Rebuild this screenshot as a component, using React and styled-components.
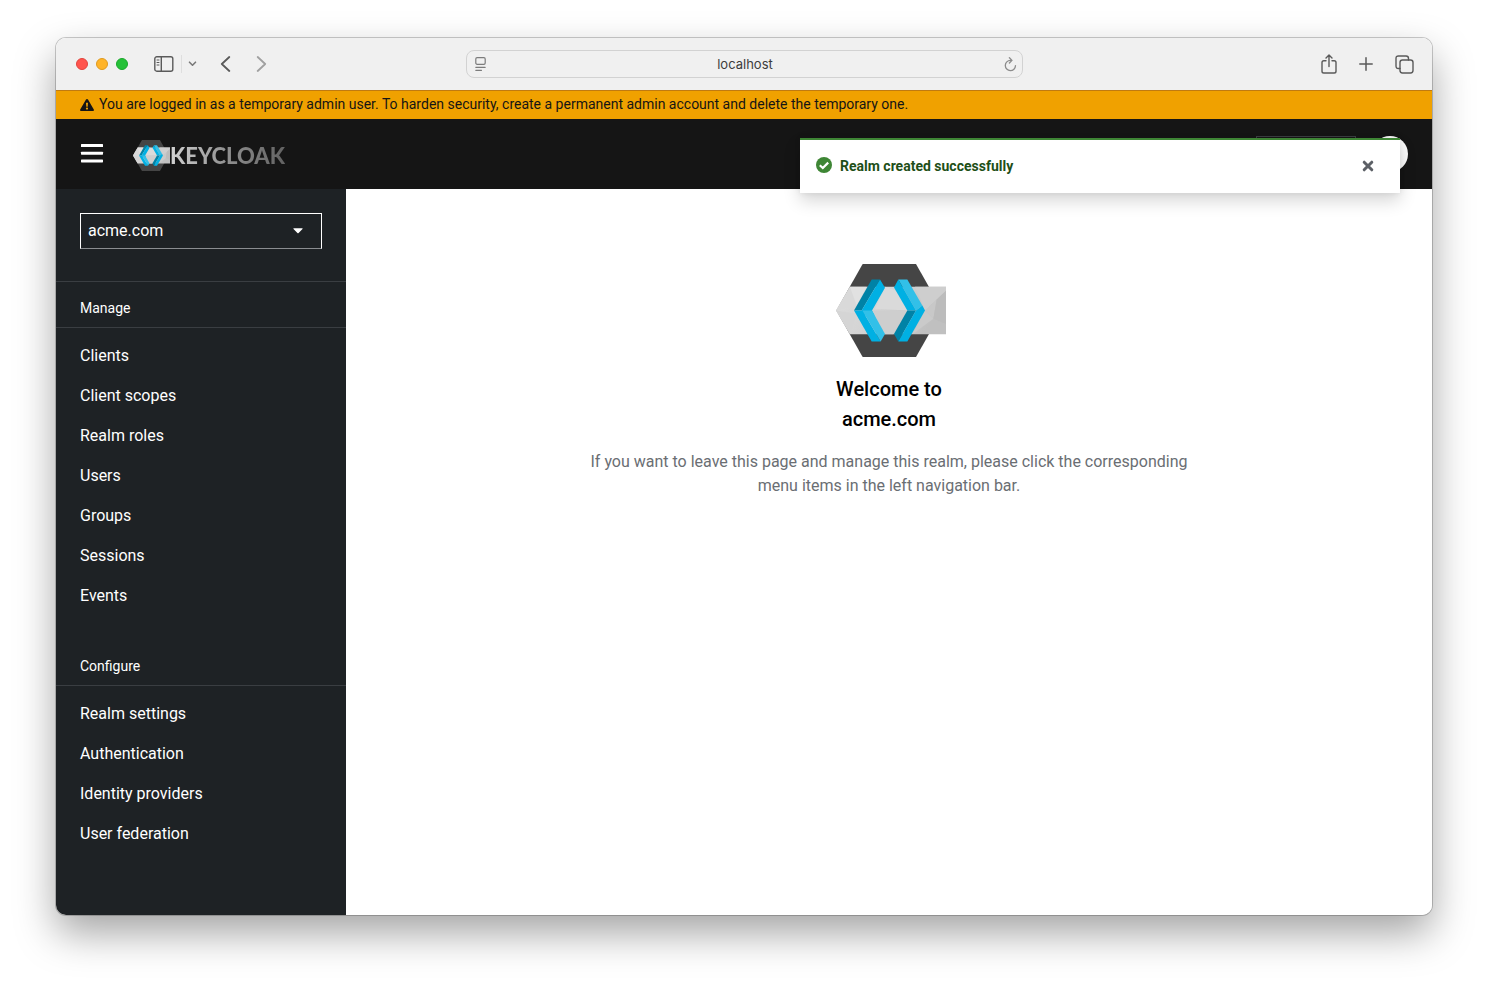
import React from 'react';
import styled, { createGlobalStyle } from 'styled-components';

const GlobalStyle = createGlobalStyle`
  *, *::before, *::after { box-sizing: border-box; }
  body {
    margin: 0;
    background: #fff;
    font-family: Roboto, Lato, sans-serif;
    font-size: 16px;
    line-height: 24px;
    color: #151515;
  }
  button, input, select { font: inherit; }
  h1, h2, p, ul { margin: 0; padding: 0; }
  svg { display: block; }
`;

const Desktop = styled.div`
  display: flex;
  min-height: 100vh;
  padding: 38px 56px 74px;
`;

const BrowserWindow = styled.div`
  flex: 1;
  display: flex;
  flex-direction: column;
  overflow: hidden;
  border-radius: 10px;
  background: #fff;
`;

const WindowShadow = styled.div`
  flex: 1;
  display: flex;
  position: relative;
  border-radius: 10px;
  box-shadow: 0 0 0 1px rgba(0, 0, 0, 0.2), 0 18px 40px rgba(0, 0, 0, 0.36);
`;

const Toolbar = styled.div`
  display: grid;
  grid-template-columns: 1fr minmax(200px, 557px) 1fr;
  align-items: center;
  height: 52px;
  background: #f0f0f0;
`;

const ToolGroup = styled.div`
  display: flex;
  align-items: center;
  justify-content: ${(p) => (p.$end ? 'flex-end' : 'flex-start')};
  gap: ${(p) => p.$gap}px;
  padding: 0 ${(p) => (p.$end ? 18 : 0)}px 0 ${(p) => (p.$end ? 0 : 20)}px;
`;

const TrafficLight = styled.button`
  width: 12px;
  height: 12px;
  padding: 0;
  border: 1px solid ${(p) => p.$edge};
  border-radius: 50%;
  background: ${(p) => p.$color};
`;

const Lights = styled.div`
  display: flex;
  gap: 8px;
  margin-right: 26px;
`;

const ToolButton = styled.button`
  display: flex;
  padding: 0;
  border: 0;
  background: none;
  color: ${(p) => (p.$muted ? '#a0a0a0' : '#5a5a5a')};
`;

const Split = styled.span`
  width: 1px;
  height: 18px;
  margin: 0 6px 0 7px;
  background: #dedede;
`;

const NavPair = styled.div`
  display: flex;
  gap: 25px;
  margin-left: 23px;
`;

const AddressBar = styled.div`
  display: flex;
  align-items: center;
  height: 28px;
  padding: 0 5px 0 8px;
  border: 1px solid #d2d2d2;
  border-radius: 8px;
`;

const Address = styled.input`
  flex: 1;
  min-width: 0;
  padding: 0;
  border: 0;
  background: none;
  font-family: Inter, sans-serif;
  font-size: 13px;
  text-align: center;
  color: #3c3c3c;
`;

const Banner = styled.div`
  display: flex;
  align-items: center;
  gap: 5px;
  min-height: 29px;
  padding: 0 24px 1px;
  border-top: 1px solid #c07a10;
  background: #f0a100;
  font-size: 14px;
  line-height: 21px;
`;

const Masthead = styled.header`
  display: flex;
  align-items: center;
  height: 70px;
  padding: 0 24px;
  background: #151515;
`;

const MenuButton = styled.button`
  display: flex;
  margin-right: 29px;
  padding: 0;
  border: 0;
  background: none;
  color: #fff;
`;

const Brand = styled.a`
  display: flex;
  align-items: center;
  margin-top: 3px;
  text-decoration: none;
`;

const BrandName = styled.span`
  font-family: Lato, sans-serif;
  font-size: 22px;
  font-weight: 900;
  line-height: 30px;
  color: transparent;
  background: linear-gradient(90deg, #d2d2d2, #8f8f8f 50%, #626262);
  background-clip: text;
`;

const Account = styled.div`
  display: flex;
  align-items: center;
  gap: 16px;
  margin-left: auto;
`;

const AccountButton = styled.button`
  width: 100px;
  height: 36px;
  border: 1px solid #3c3f42;
  background: none;
`;

const Avatar = styled.span`
  width: 36px;
  height: 36px;
  border-radius: 50%;
  background: #fafafa;
`;

const Body = styled.div`
  flex: 1;
  display: flex;
`;

const Sidebar = styled.nav`
  flex: 0 0 290px;
  background: #1e2225;
  color: #fff;
`;

const RealmPicker = styled.div`
  display: grid;
  align-items: center;
  padding: 24px 24px 32px;
  border-bottom: 1px solid #3a3e42;

  > * { grid-area: 1 / 1; }
  > svg { justify-self: end; margin-right: 19px; pointer-events: none; }
`;

const RealmSelect = styled.select`
  width: 100%;
  height: 36px;
  padding: 0 7px;
  border: 1px solid #fff;
  border-bottom-color: #8a8d90;
  border-radius: 0;
  appearance: none;
  background: none;
  color: #fff;
`;

const Group = styled.section`
  padding-bottom: 24px;
`;

const GroupTitle = styled.h2`
  padding: 16px 24px 8px;
  border-bottom: 1px solid #3a3e42;
  font-size: 14px;
  font-weight: 400;
  line-height: 21px;
`;

const NavList = styled.ul`
  padding-top: 8px;
  list-style: none;
`;

const NavLink = styled.a`
  display: block;
  padding: 8px 24px;
  color: #fff;
  text-decoration: none;
`;

const Main = styled.main`
  flex: 1;
  display: flex;
  flex-direction: column;
  align-items: center;
  padding: 75px 32px 32px;
  text-align: center;
`;

const Title = styled.h1`
  margin: 17px 0 16px;
  color: #000;
  font-size: 20px;
  font-weight: 500;
  line-height: 30px;
`;

const Lead = styled.p`
  max-width: 600px;
  color: #6a6e73;
`;

const Toast = styled.div`
  position: absolute;
  top: 100px;
  right: 32px;
  display: flex;
  align-items: center;
  gap: 8px;
  width: 600px;
  max-width: calc(100% - 64px);
  height: 55px;
  padding: 0 26px 1px 16px;
  border-top: 2px solid #3e8635;
  background: #fff;
  box-shadow: 0 8px 16px rgba(3, 3, 3, 0.16), 0 0 6px rgba(3, 3, 3, 0.08);
  color: #1e4f18;
  font-size: 14px;
  font-weight: 700;
  line-height: 21px;
`;

const CloseButton = styled.button`
  display: flex;
  margin-left: auto;
  padding: 0;
  border: 0;
  background: none;
  color: #5c6066;
`;

function Emblem({ width, height, id, viewBox }) {
  return (
    <svg width={width} height={height} viewBox={viewBox} preserveAspectRatio="none" aria-hidden="true">
      <defs>
        <linearGradient id={id} x1="0" x2="1" y1="0" y2="0.3">
          <stop offset="0" stopColor="#dedede" />
          <stop offset="0.5" stopColor="#d3d3d3" />
          <stop offset="1" stopColor="#c0c0c0" />
        </linearGradient>
      </defs>
      <path d="M113 26H273L352 165L273 304H113L34 165Z" fill="#454545" />
      <path d="M75 94H363V236H75L33 165Z" fill={`url(#${id})`} />
      <path d="M33 165L75 94L95 150Z" fill="#d9d9d9" />
      <path d="M75 94L95 150L125 94Z" fill="#e1e1e1" />
      <path d="M33 165L95 175L75 236Z" fill="#d5d5d5" />
      <path d="M180 94L225 110L247 165L150 160Z" fill="#dadada" />
      <path d="M143 165L247 165L205 236H180Z" fill="#cecece" />
      <path d="M270 94H363V106L300 165Z" fill="#cecece" />
      <path d="M300 165L335 132L325 190Z" fill="#c8c8c8" />
      <path d="M325 190L335 132L363 106V205Z" fill="#bcbcbc" />
      <path d="M300 165L325 190L262 236Z" fill="#cacaca" />
      <path d="M140 72H165L110 165H87Z" fill="#0082a6" />
      <path d="M165 72L180 97L141 165L149 180L115 180L110 165Z" fill="#00b0e3" />
      <path d="M87 165H112L167 258H140Z" fill="#00b0e3" />
      <path d="M112 165H141L180 235L167 258Z" fill="#32c0e8" />
      <path d="M220 72H247L292 150L273 165Z" fill="#32c0e8" />
      <path d="M220 72L207 96L247 165H273Z" fill="#00b0e3" />
      <path d="M247 165H273L220 258L207 235Z" fill="#0082a6" />
      <path d="M273 165L292 150L300 165L247 258H220Z" fill="#00b0e3" />
    </svg>
  );
}

const stroke = { fill: 'none', stroke: 'currentColor', strokeLinecap: 'round', strokeLinejoin: 'round' };

const SidebarIcon = () => (
  <svg width="20" height="16" viewBox="0 0 20 16" {...stroke} strokeWidth="1.4">
    <rect x="0.8" y="0.8" width="18" height="14.4" rx="2" />
    <path d="M7.3 1V15" />
    <path d="M3 4H5M3 6.5H5M3 9H5" strokeWidth="1" />
  </svg>
);
const DownIcon = () => (
  <svg width="9" height="6" viewBox="0 0 9 6" {...stroke} stroke="#7a7a7a" strokeWidth="1.6"><path d="M1.5 1.2L4.5 4.2L7.5 1.2" /></svg>
);
const BackIcon = () => (
  <svg width="11" height="16" viewBox="0 0 11 16" {...stroke} strokeWidth="1.8"><path d="M9.3 1L1.8 8L9.3 15" /></svg>
);
const ForwardIcon = () => (
  <svg width="11" height="16" viewBox="0 0 11 16" {...stroke} strokeWidth="1.8"><path d="M1.7 1L9.2 8L1.7 15" /></svg>
);
const ReaderIcon = () => (
  <svg width="12" height="14" viewBox="0 0 12 14" fill="none" stroke="#7c7c7c" strokeLinecap="round" strokeWidth="1.2" aria-hidden="true">
    <rect x="0.8" y="0.7" width="9.4" height="6.6" rx="1.3" />
    <path d="M0.8 10.3H10.2M0.8 13.3H6.5" />
  </svg>
);
const ReloadIcon = () => (
  <svg width="13" height="15" viewBox="0 0 13 15" {...stroke} stroke="#8c8c8c" strokeWidth="1.3">
    <path d="M7.6 3.4H6.4A5.1 5.1 0 1 0 11.5 8.6M5.4 0.8L8 3.4L5.4 6" />
  </svg>
);
const ShareIcon = () => (
  <svg width="16" height="20" viewBox="0 0 16 20" {...stroke} strokeWidth="1.4">
    <path d="M5 6.7H2.8Q1 6.7 1 8.5V17.2Q1 19 2.8 19H13.2Q15 19 15 17.2V8.5Q15 6.7 13.2 6.7H11M8 12.5V1.2M5 4L8 1L11 4" />
  </svg>
);
const PlusIcon = () => (
  <svg width="14" height="14" viewBox="0 0 14 14" {...stroke} strokeWidth="1.5"><path d="M7 0.8V13.2M0.8 7H13.2" /></svg>
);
const TabsIcon = () => (
  <svg width="19" height="19" viewBox="0 0 19 19" {...stroke} strokeWidth="1.4">
    <rect x="5" y="5" width="13" height="13" rx="2.4" />
    <path d="M5 13.5H3.4Q1 13.5 1 11.1V3.4Q1 1 3.4 1H11.1Q13.5 1 13.5 3.4V5" />
  </svg>
);
const WarningIcon = () => (
  <svg width="14" height="12" viewBox="0 0 14 12" aria-hidden="true">
    <path d="M7 0Q7.7 0 8 0.6L13.8 10.4Q14.4 12 13 12H1Q-0.4 12 0.2 10.4L6 0.6Q6.3 0 7 0Z" fill="#151515" />
    <path d="M6 3.7H8L7.7 7.8H6.3Z" fill="#f0a100" />
    <circle cx="7" cy="9.6" r="1.1" fill="#f0a100" />
  </svg>
);
const MenuIcon = () => (
  <svg width="24" height="20" viewBox="0 0 24 20" fill="currentColor">
    <rect x="1" y="0" width="22" height="3" rx="0.6" />
    <rect x="1" y="7.7" width="22" height="3" rx="0.6" />
    <rect x="1" y="15.4" width="22" height="3" rx="0.6" />
  </svg>
);
const CaretIcon = () => (
  <svg width="10" height="6" viewBox="0 0 10 6" aria-hidden="true">
    <path d="M0.8 0.3H9.2Q10 0.4 9.5 1.1L5.6 5Q5 5.6 4.4 5L0.5 1.1Q0 0.4 0.8 0.3Z" fill="#fff" />
  </svg>
);
const SuccessIcon = () => (
  <svg width="16" height="18" viewBox="0 0 16 18" aria-hidden="true">
    <circle cx="8" cy="8" r="8" fill="#3e8635" />
    <path d="M3.8 8.2L6.8 11L12.2 5.6" fill="none" stroke="#fff" strokeWidth="2.2" />
  </svg>
);
const CloseIcon = () => (
  <svg width="12" height="12" viewBox="0 0 12 12" {...stroke} strokeWidth="3">
    <path d="M2.2 2.2L9.8 9.8M9.8 2.2L2.2 9.8" />
  </svg>
);

const groups = [
  { title: 'Manage', items: ['Clients', 'Client scopes', 'Realm roles', 'Users', 'Groups', 'Sessions', 'Events'] },
  { title: 'Configure', items: ['Realm settings', 'Authentication', 'Identity providers', 'User federation'] },
];

export default function App() {
  return (
    <Desktop>
      <GlobalStyle />
      <WindowShadow>
        <BrowserWindow>
          <Toolbar>
            <ToolGroup $gap={0}>
              <Lights>
                <TrafficLight aria-label="Close window" $color="#ff544d" $edge="#e2443d" />
                <TrafficLight aria-label="Minimize window" $color="#ffb429" $edge="#e09a1e" />
                <TrafficLight aria-label="Zoom window" $color="#25c138" $edge="#1aa82b" />
              </Lights>
              <ToolButton aria-label="Show sidebar"><SidebarIcon /></ToolButton>
              <Split />
              <ToolButton aria-label="Tab groups"><DownIcon /></ToolButton>
              <NavPair>
                <ToolButton aria-label="Back"><BackIcon /></ToolButton>
                <ToolButton aria-label="Forward" $muted><ForwardIcon /></ToolButton>
              </NavPair>
            </ToolGroup>
            <AddressBar>
              <ReaderIcon />
              <Address aria-label="Address" defaultValue="localhost" />
              <ToolButton aria-label="Reload" $muted><ReloadIcon /></ToolButton>
            </AddressBar>
            <ToolGroup $end $gap={22}>
              <ToolButton aria-label="Share"><ShareIcon /></ToolButton>
              <ToolButton aria-label="New tab"><PlusIcon /></ToolButton>
              <ToolButton aria-label="Tab overview"><TabsIcon /></ToolButton>
            </ToolGroup>
          </Toolbar>
          <Banner>
            <WarningIcon />
            <span>You are logged in as a temporary admin user. To harden security, create a permanent admin account and delete the temporary one.</span>
          </Banner>
          <Masthead>
            <MenuButton aria-label="Global navigation"><MenuIcon /></MenuButton>
            <Brand href="#">
              <Emblem width={37} height={31} id="emblem-small" viewBox="33 26 330 278" />
              <BrandName>KEYCLOAK</BrandName>
            </Brand>
            <Account>
              <AccountButton aria-label="Account menu" />
              <Avatar />
            </Account>
          </Masthead>
          <Body>
            <Sidebar>
              <RealmPicker>
                <RealmSelect aria-label="Realm" defaultValue="acme.com">
                  <option>acme.com</option>
                </RealmSelect>
                <CaretIcon />
              </RealmPicker>
              {groups.map((group) => (
                <Group key={group.title}>
                  <GroupTitle>{group.title}</GroupTitle>
                  <NavList>
                    {group.items.map((item) => (
                      <li key={item}><NavLink href="#">{item}</NavLink></li>
                    ))}
                  </NavList>
                </Group>
              ))}
            </Sidebar>
            <Main>
              <Emblem width={114} height={93} id="emblem-large" viewBox="21 26 342 278" />
              <Title>Welcome to<br />acme.com</Title>
              <Lead>If you want to leave this page and manage this realm, please click the corresponding menu items in the left navigation bar.</Lead>
            </Main>
          </Body>
        </BrowserWindow>
        <Toast role="status">
          <SuccessIcon />
          <span>Realm created successfully</span>
          <CloseButton aria-label="Close alert"><CloseIcon /></CloseButton>
        </Toast>
      </WindowShadow>
    </Desktop>
  );
}
